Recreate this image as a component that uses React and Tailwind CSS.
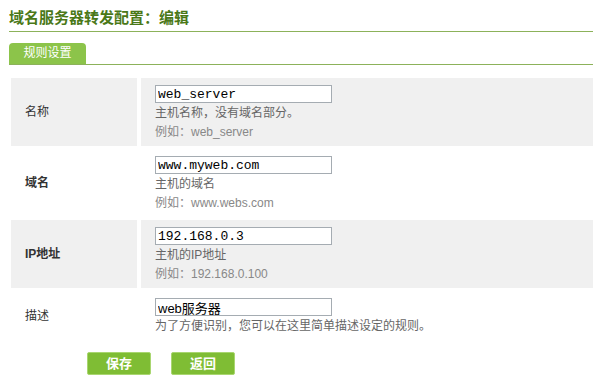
import React from 'react';

const rows = [
  { label: '名称', bold: false, value: 'web_server', help: '主机名称，没有域名部分。', example: '例如：web_server', gray: true },
  { label: '域名', bold: true, value: 'www.myweb.com', help: '主机的域名', example: '例如：www.webs.com', gray: false },
  { label: 'IP地址', bold: true, value: '192.168.0.3', help: '主机的IP地址', example: '例如：192.168.0.100', gray: true },
];

function Row({ row }) {
  const bg = row.gray ? 'bg-[#f0f0f0]' : 'bg-white';
  return (
    <div className="grid grid-cols-[126px_1fr] gap-x-[4px]">
      <div className={`${bg} flex items-center pl-[14px] text-[12px] text-[#333] ${row.bold ? 'font-bold' : ''}`}>
        {row.label}
      </div>
      <div className={`${bg} pl-[14px] pt-[7px] pb-[4px]`}>
        <input
          readOnly
          value={row.value}
          className="block w-[177px] h-[18px] border border-[#a5acb2] bg-white px-[2px] text-[13px] leading-[16px] text-black font-['Liberation_Mono','Noto_Sans_CJK_SC',monospace] outline-none"
        />
        <div className="pt-[1px] text-[12px] leading-[19px] text-[#666]">{row.help}</div>
        {row.example && <div className="text-[12px] leading-[19px] text-[#888]">{row.example}</div>}
      </div>
    </div>
  );
}

export default function App() {
  return (
    <div className="w-[599px] h-[381px] bg-white font-['Liberation_Sans','Noto_Sans_CJK_SC',sans-serif] overflow-hidden">
      <div className="ml-[9px] w-[584px]">
        {/* page title */}
        <div className="pt-[8px] h-[32px] border-b border-[#8cb25a]">
          <h1 className="text-[15px] leading-[17px] font-bold text-[#4a7818] font-['Noto_Sans_CJK_SC',sans-serif]">
            域名服务器转发配置：编辑
          </h1>
        </div>

        {/* tab strip */}
        <div className="mt-[11px] flex border-b border-[#8cb25a]">
          <div className="w-[77px] h-[21px] rounded-t-[4px] bg-[#8cc44a] text-white text-[12px] leading-[21px] text-center">
            规则设置
          </div>
        </div>

        {/* form rows */}
        <div className="mt-[13px] ml-[2px] flex flex-col gap-y-[3px]">
          {rows.map((r) => (
            <Row key={r.label} row={r} />
          ))}
          <div className="grid grid-cols-[126px_1fr] gap-x-[4px]">
            <div className="flex items-center pl-[14px] text-[12px] text-[#333]">描述</div>
            <div className="pl-[14px] pt-[7px] pb-[5px]">
              <input
                readOnly
                value="web服务器"
                className="block w-[177px] h-[18px] border border-[#a5acb2] bg-white px-[2px] text-[13px] leading-[16px] text-black outline-none"
              />
              <div className="pt-[1px] text-[12px] leading-[19px] text-[#666]">为了方便识别，您可以在这里简单描述设定的规则。</div>
            </div>
          </div>
        </div>

        {/* buttons */}
        <div className="mt-[11px] ml-[78px] flex gap-x-[20px]">
          <button className="w-[64px] h-[23px] bg-[#7fbd34] border border-[#a9d670] rounded-[2px] text-white text-[13px] font-bold leading-[21px]">
            保存
          </button>
          <button className="w-[64px] h-[23px] bg-[#7fbd34] border border-[#a9d670] rounded-[2px] text-white text-[13px] font-bold leading-[21px]">
            返回
          </button>
        </div>
      </div>
    </div>
  );
}
